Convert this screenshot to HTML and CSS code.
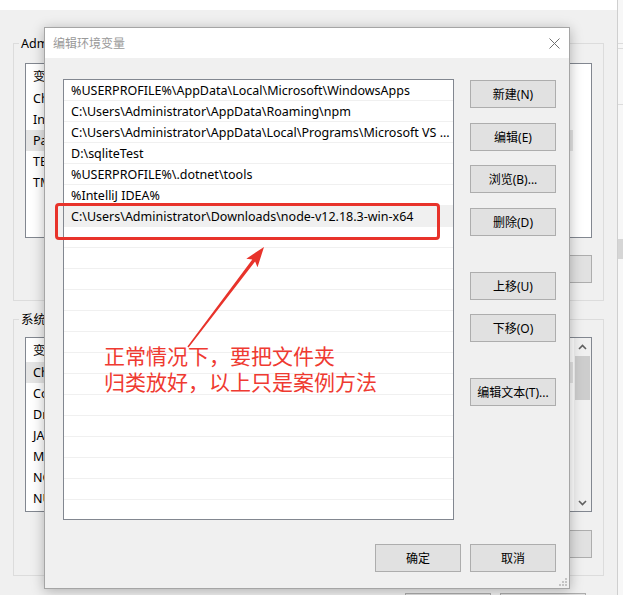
FILE: index.html
```html
<!DOCTYPE html>
<html lang="zh-CN">
<head>
<meta charset="utf-8">
<title>编辑环境变量</title>
<link rel="stylesheet" href="styles.css">
</head>
<body>
<div class="desk">
  <div class="win">
    <div class="win-top"></div>
    <div class="win-body">
      <fieldset class="group g-user">
        <legend>Administrator 的用户变量(U)</legend>
        <div class="lv">
          <div class="lv-rows">
            <div class="lv-head"><span class="c1">变量</span></div>
            <div class="lv-row"><span class="c1">ChocolateyLastPathUpdate</span></div>
            <div class="lv-row"><span class="c1">IntelliJ IDEA</span></div>
            <div class="lv-row sel"><span class="c1">Path</span></div>
            <div class="lv-row"><span class="c1">TEMP</span></div>
            <div class="lv-row"><span class="c1">TMP</span></div>
          </div>
        </div>
        <div class="btnrow">
          <button class="btn">新建(N)...</button>
          <button class="btn">编辑(E)...</button>
          <button class="btn">删除(D)</button>
        </div>
      </fieldset>
      <fieldset class="group g-sys">
        <legend>系统变量(S)</legend>
        <div class="lv">
          <div class="lv-rows">
            <div class="lv-head"><span class="c1">变量</span></div>
            <div class="lv-row sel"><span class="c1">ChocolateyInstall</span></div>
            <div class="lv-row"><span class="c1">ComSpec</span></div>
            <div class="lv-row"><span class="c1">DriverData</span></div>
            <div class="lv-row"><span class="c1">JAVA_HOME</span></div>
            <div class="lv-row"><span class="c1">MAVEN_HOME</span></div>
            <div class="lv-row"><span class="c1">NODE_PATH</span></div>
            <div class="lv-row"><span class="c1">NUMBER_OF_PROCESSORS</span></div>
          </div>
          <div class="sb">
            <div class="sb-arrow"><svg width="9" height="6" viewBox="0 0 9 6"><polyline points="1,5 4.5,1.5 8,5" fill="none" stroke="#606060" stroke-width="1.6"/></svg></div>
            <div class="sb-thumb"></div>
            <div class="sb-fill"></div>
            <div class="sb-arrow"><svg width="9" height="6" viewBox="0 0 9 6"><polyline points="1,1 4.5,4.5 8,1" fill="none" stroke="#606060" stroke-width="1.6"/></svg></div>
          </div>
        </div>
        <div class="btnrow">
          <button class="btn">新建(W)...</button>
          <button class="btn">编辑(I)...</button>
          <button class="btn">删除(L)</button>
        </div>
      </fieldset>
      <div class="btnrow win-foot">
        <button class="btn">确定</button>
        <button class="btn">取消</button>
      </div>
    </div>
  </div>
  <div class="side">
    <div class="side-line l1"></div>
    <div class="side-line l2"></div>
    <div class="side-line l3"></div>
    <div class="side-block"></div>
  </div>

  <div class="dialog">
    <div class="dlg-title">
      <span class="dlg-caption">编辑环境变量</span>
      <svg class="dlg-close" width="11" height="11" viewBox="0 0 11 11"><path d="M0.5 0.5 L10.5 10.5 M10.5 0.5 L0.5 10.5" stroke="#6f6f6f" stroke-width="1" fill="none"/></svg>
    </div>
    <div class="dlg-body">
      <div class="dlg-main">
        <div class="paths">
          <div class="path-row">%USERPROFILE%\AppData\Local\Microsoft\WindowsApps</div>
          <div class="path-row">C:\Users\Administrator\AppData\Roaming\npm</div>
          <div class="path-row">C:\Users\Administrator\AppData\Local\Programs\Microsoft VS ...</div>
          <div class="path-row">D:\sqliteTest</div>
          <div class="path-row">%USERPROFILE%\.dotnet\tools</div>
          <div class="path-row">%IntelliJ IDEA%</div>
          <div class="path-row sel">C:\Users\Administrator\Downloads\node-v12.18.3-win-x64</div>
          <div class="path-row"></div>
          <div class="path-row"></div>
          <div class="path-row"></div>
          <div class="path-row"></div>
          <div class="path-row"></div>
          <div class="path-row"></div>
          <div class="path-row"></div>
          <div class="path-row"></div>
          <div class="path-row"></div>
          <div class="path-row"></div>
          <div class="path-row"></div>
          <div class="path-row"></div>
          <div class="path-row"></div>
          <div class="path-row"></div>
        </div>
        <div class="dlg-btns">
          <button class="btn">新建(N)</button>
          <button class="btn">编辑(E)</button>
          <button class="btn">浏览(B)...</button>
          <button class="btn">删除(D)</button>
          <button class="btn sep">上移(U)</button>
          <button class="btn">下移(O)</button>
          <button class="btn sep">编辑文本(T)...</button>
        </div>
      </div>
      <div class="dlg-foot">
        <button class="btn">确定</button>
        <button class="btn">取消</button>
      </div>
    </div>
    <svg class="grip" width="9" height="9" viewBox="0 0 9 9">
      <rect x="7" y="1" width="2" height="2" fill="#c4c4c4"/>
      <rect x="4" y="4" width="2" height="2" fill="#c4c4c4"/>
      <rect x="7" y="4" width="2" height="2" fill="#c4c4c4"/>
      <rect x="1" y="7" width="2" height="2" fill="#c4c4c4"/>
      <rect x="4" y="7" width="2" height="2" fill="#c4c4c4"/>
      <rect x="7" y="7" width="2" height="2" fill="#c4c4c4"/>
    </svg>
  </div>

  <div class="mark"></div>
  <svg class="arrow" width="623" height="595" viewBox="0 0 623 595">
    <polygon points="187.4,346.6 252.3,259.4 246.3,258.7 264,247 257.5,267.2 255.1,261.6 188.6,347.4" fill="#e8332b"/>
  </svg>
  <div class="note">正常情况下，要把文件夹<br>归类放好，以上只是案例方法</div>
</div>
</body>
</html>
```

FILE: styles.css
```css
html, body {
  margin: 0;
  padding: 0;
}

body {
  width: 623px;
  height: 595px;
  overflow: hidden;
  background: #f0f0f0;
  font-family: "Noto Sans", "Noto Sans CJK SC", sans-serif;
  font-size: 12px;
  color: #000;
}

.desk {
  position: relative;
  width: 623px;
  height: 595px;
  display: flex;
  overflow: hidden;
}

/* ---------- background window ---------- */
.win {
  width: 617px;
  flex: none;
  background: #f0f0f0;
}

.win-top {
  height: 10px;
  background: #fff;
}

.win-body {
  padding-top: 25px;
}

.group {
  margin: 0 13px;
  padding: 11px 11px 17px 11px;
  border: 1px solid #dcdcdc;
  min-width: 0;
}

.group legend {
  margin-left: -6px;
  padding: 0 2px;
  line-height: 17px;
  font-size: 12.5px;
}

.g-sys {
  margin-top: 10px;
  padding-top: 9px;
}

.lv {
  height: 175px;
  box-sizing: border-box;
  border: 1px solid #828790;
  background: #fff;
  display: flex;
  overflow: hidden;
  font-size: 12.5px;
}

.lv-rows {
  flex: 1;
  min-width: 0;
}

.lv-head {
  height: 24px;
  padding-top: 2px;
  box-sizing: border-box;
  line-height: 22px;
  display: flex;
  white-space: nowrap;
}

.lv-row {
  height: 21px;
  line-height: 21px;
  display: flex;
  white-space: nowrap;
  width: 547px;
}

.lv-row.sel {
  background: #e5e5e5;
}

.c1 {
  width: 150px;
  padding-left: 7px;
  flex: none;
  overflow: hidden;
}

.sb {
  width: 17px;
  flex: none;
  background: #f0f0f0;
  display: flex;
  flex-direction: column;
}

.sb-arrow {
  height: 17px;
  display: flex;
  align-items: center;
  justify-content: center;
}

.sb-thumb {
  margin: 1px 1px 0 1px;
  height: 44px;
  background: #cdcdcd;
}

.sb-fill {
  flex: 1;
}

.btnrow {
  margin-top: 17px;
  display: flex;
  justify-content: flex-end;
  gap: 9px;
}

.g-sys .btnrow {
  margin-top: 18px;
}

.win-foot {
  margin-right: 31px;
}

.btn {
  width: 86px;
  height: 28px;
  box-sizing: border-box;
  border: 1px solid #adadad;
  background: #e1e1e1;
  font-family: "Noto Sans", "Noto Sans CJK SC", sans-serif;
  font-size: 12px;
  color: #000;
  padding: 0;
  margin: 0;
  flex: none;
}

/* ---------- right edge (another window) ---------- */
.side {
  flex: 1;
  border-left: 1px solid #cfcfcf;
  background: #f7f7f7;
  display: flex;
  flex-direction: column;
}

.side-line {
  height: 1px;
  background: #dcdcdc;
}

.side-line.l1 { margin-top: 43px; }
.side-line.l2 { margin-top: 4px; }
.side-line.l3 { margin-top: 55px; }

.side-block {
  margin-top: 134px;
  height: 20px;
  background: #d6d6d6;
}

/* ---------- dialog ---------- */
.dialog {
  position: absolute;
  left: 44px;
  top: 27px;
  width: 526px;
  height: 562px;
  box-sizing: border-box;
  border: 1px solid #a5a5a5;
  background: #f0f0f0;
  box-shadow: 0 2px 12px rgba(0, 0, 0, 0.28);
}

.dlg-title {
  height: 30px;
  background: #fff;
  display: flex;
  align-items: center;
  justify-content: space-between;
  padding: 0 9px 0 8px;
}

.dlg-caption {
  color: #999;
  font-family: "Noto Sans CJK SC", sans-serif;
  font-size: 12px;
  line-height: 28px;
}

.dlg-body {
  padding: 21px 13px 16px 18px;
}

.dlg-main {
  display: grid;
  grid-template-columns: 391px 86px;
  column-gap: 16px;
  height: 441px;
}

.paths {
  box-sizing: border-box;
  border: 1px solid #828790;
  background: #fff;
  overflow: hidden;
}

.path-row {
  height: 21px;
  box-sizing: border-box;
  border-bottom: 1px solid #f0f0f0;
  padding-left: 7px;
  font-size: 12.5px;
  line-height: 22px;
  white-space: nowrap;
  overflow: hidden;
}

.path-row.sel {
  background: #f0f0f0;
}

.dlg-btns {
  display: flex;
  flex-direction: column;
  gap: 14.5px;
  padding-top: 1px;
}

.dlg-btns .sep {
  margin-top: 21.5px;
}

.dlg-foot {
  margin-top: 24px;
  display: flex;
  justify-content: flex-end;
  gap: 9px;
}

.grip {
  position: absolute;
  right: 2px;
  bottom: 2px;
}

/* ---------- annotation overlay ---------- */
.mark {
  position: absolute;
  left: 55px;
  top: 203px;
  width: 385px;
  height: 37px;
  box-sizing: border-box;
  border: 3px solid #e8332b;
  border-radius: 4px;
}

.arrow {
  position: absolute;
  left: 0;
  top: 0;
  pointer-events: none;
}

.note {
  position: absolute;
  left: 104px;
  top: 342px;
  font-family: "Noto Sans CJK SC", sans-serif;
  font-size: 21px;
  line-height: 26px;
  color: #ef3a31;
  white-space: nowrap;
}
```
